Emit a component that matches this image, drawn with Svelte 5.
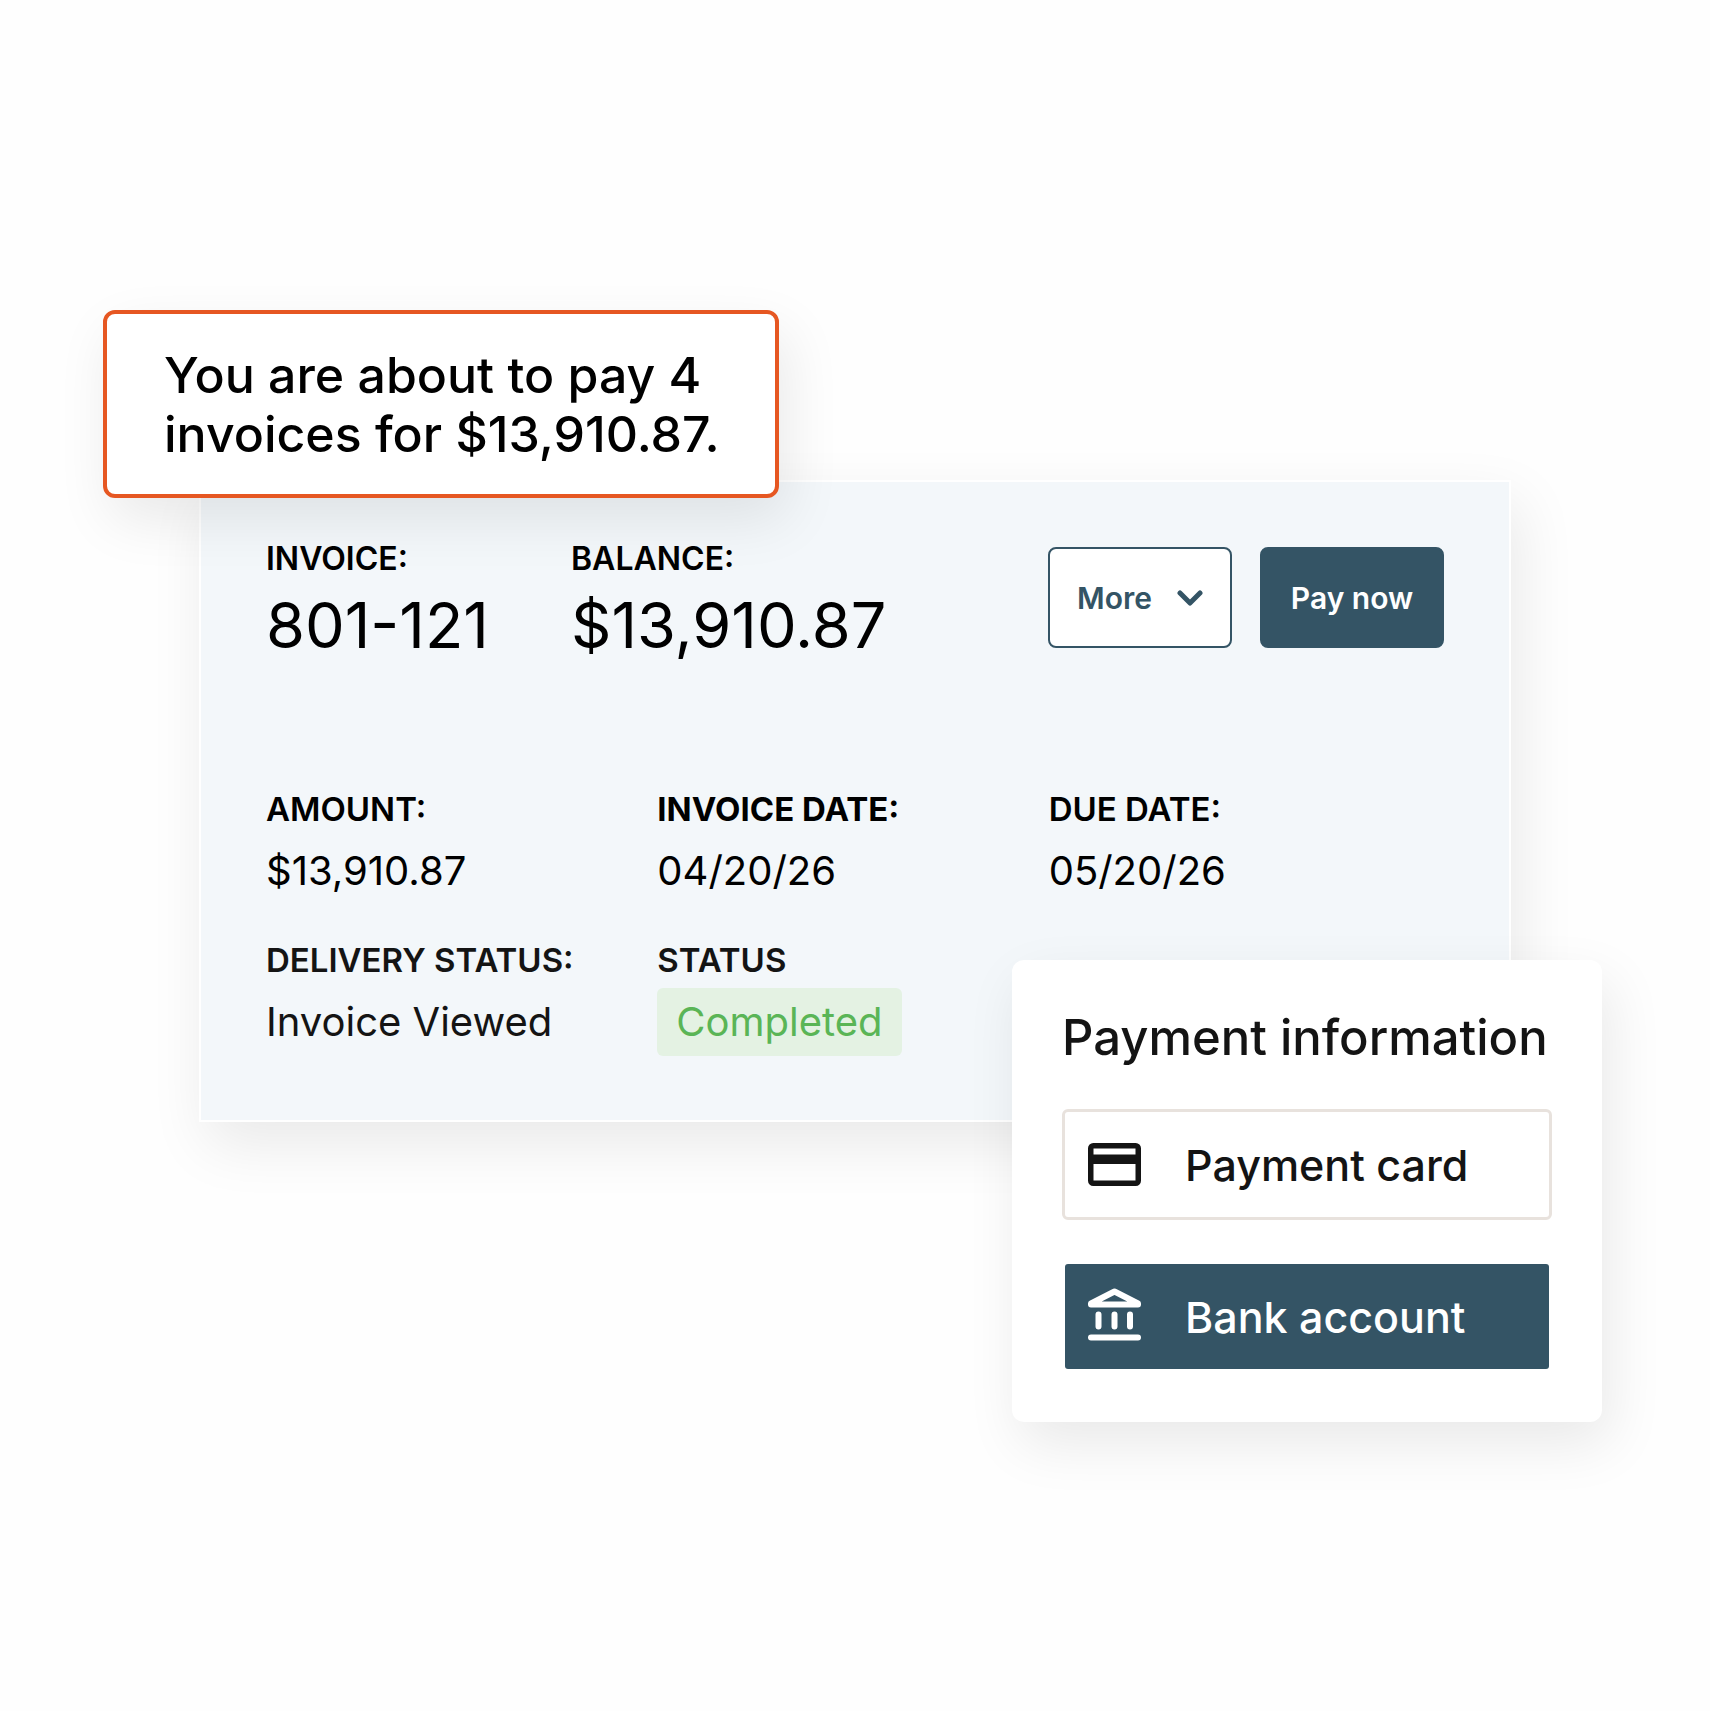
<script>
    const totals = [
        { label: 'INVOICE:', value: '801-121' },
        { label: 'BALANCE:', value: '$13,910.87' }
    ];

    const details = [
        { label: 'AMOUNT:', value: '$13,910.87' },
        { label: 'INVOICE DATE:', value: '04/20/26', strong: true },
        { label: 'DUE DATE:', value: '05/20/26' },
        { label: 'DELIVERY STATUS:', value: 'Invoice Viewed', soft: true },
        { label: 'STATUS', value: 'Completed', soft: true, badge: true }
    ];

    const methods = [
        { id: 'card', label: 'Payment card' },
        { id: 'bank', label: 'Bank account' }
    ];

    let selected = $state('bank');
</script>

<main class="page">
    <div class="scene">
        <section class="invoice" aria-label="Invoice">
            <header class="invoice-head">
                <dl class="totals">
                    {#each totals as item}
                        <div class="total">
                            <dt>{item.label}</dt>
                            <dd>{item.value}</dd>
                        </div>
                    {/each}
                </dl>
                <div class="actions">
                    <button class="btn btn-outline" type="button">
                        More
                        <svg class="chevron" viewBox="0 0 26 16" aria-hidden="true">
                            <path d="M3 3l10 10L23 3" />
                        </svg>
                    </button>
                    <button class="btn btn-solid" type="button">Pay now</button>
                </div>
            </header>

            <dl class="details">
                {#each details as item}
                    <div class="detail" class:soft={item.soft}>
                        <dt class:strong={item.strong}>{item.label}</dt>
                        <dd class:badge={item.badge}>{item.value}</dd>
                    </div>
                {/each}
            </dl>
        </section>

        <p class="notice" role="status">You are about to pay 4 invoices for $13,910.87.</p>

        <section class="payment">
            <h2>Payment information</h2>
            {#each methods as method}
                <button
                    class="method"
                    class:selected={selected === method.id}
                    type="button"
                    aria-pressed={selected === method.id}
                    onclick={() => (selected = method.id)}
                >
                    {#if method.id === 'card'}
                        <svg class="icon" viewBox="0 0 53 53" aria-hidden="true">
                            <rect x="2.75" y="7.75" width="47.5" height="37.5" rx="2.5" fill="none" stroke="currentColor" stroke-width="5.5" />
                            <path d="M3 16.5h47V26H3z" fill="currentColor" />
                        </svg>
                    {:else}
                        <svg class="icon" viewBox="0 0 53 53" aria-hidden="true">
                            <g fill="none" stroke="currentColor" stroke-width="6" stroke-linecap="round" stroke-linejoin="round">
                                <path d="M3 14.500v-1L26.500 1.500 50 13.500v1z" />
                                <path d="M10.500 24.500v12M26.500 24.500v12M42 24.500v12M3 47.500h47" />
                            </g>
                        </svg>
                    {/if}
                    {method.label}
                </button>
            {/each}
        </section>
    </div>
</main>

<style>
    :global(body) {
        background: #fefefe;
    }

    .page {
        --slate: #345465;
        --shadow: 8px 22px 56px rgba(0, 0, 0, 0.085);

        padding: 480px 199px 589px;
        font-family: Inter, "Liberation Sans", sans-serif;
        color: #000;
    }

    .scene {
        position: relative;
    }

    dl,
    dd,
    h2,
    .notice {
        margin: 0;
    }

    button {
        font-family: inherit;
        cursor: pointer;
    }

    /* invoice card */
    .invoice {
        padding: 57px 65px 64px;
        border: 2px solid #fff;
        background: #f3f7fa;
        box-shadow: var(--shadow);
    }

    .invoice-head {
        display: flex;
        justify-content: space-between;
        align-items: flex-end;
        padding-bottom: 126px;
    }

    .totals {
        display: flex;
        gap: 82px;
    }

    .total dt {
        font-size: 32px;
        font-weight: 600;
        line-height: 40px;
    }

    .total dd {
        margin-top: 8px;
        font-size: 63px;
        line-height: 76px;
    }

    .actions {
        display: flex;
        gap: 28px;
        padding-bottom: 15px;
    }

    .btn {
        display: flex;
        align-items: center;
        justify-content: center;
        gap: 25px;
        min-width: 184px;
        height: 101px;
        padding: 0 26px;
        border: 2px solid var(--slate);
        border-radius: 8px;
        font-size: 30px;
        font-weight: 600;
    }

    .btn-outline {
        background: #fff;
        color: var(--slate);
    }

    .btn-solid {
        background: var(--slate);
        color: #fff;
    }

    .chevron {
        width: 26px;
        height: 16px;
        fill: none;
        stroke: currentColor;
        stroke-width: 5;
        stroke-linecap: round;
        stroke-linejoin: round;
    }

    .details {
        display: grid;
        grid-template-columns: repeat(3, 1fr);
        row-gap: 35px;
        padding-right: 4px;
    }

    .detail dt {
        font-size: 33px;
        font-weight: 600;
        line-height: 40px;
    }

    .detail dt.strong {
        font-weight: 700;
    }

    .detail dd {
        margin-top: 8px;
        font-size: 40px;
        line-height: 68px;
    }

    .soft {
        color: #141414;
    }

    .detail .badge {
        width: fit-content;
        padding: 0 19px;
        border-radius: 6px;
        background: #e4f2e3;
        color: #5ab556;
    }

    /* notice over the top left corner */
    .notice {
        position: absolute;
        top: -170px;
        left: -96px;
        box-sizing: border-box;
        width: 676px;
        padding: 32px 50px 30px 57px;
        border: 4px solid #e65722;
        border-radius: 12px;
        background: #fff;
        box-shadow: var(--shadow);
        font-size: 50px;
        font-weight: 500;
        line-height: 59px;
    }

    /* payment panel over the bottom right corner */
    .payment {
        position: absolute;
        top: 480px;
        right: -91px;
        display: flex;
        flex-direction: column;
        gap: 41px;
        box-sizing: border-box;
        width: 590px;
        padding: 48px 50px 50px;
        border-radius: 12px;
        background: #fff;
        box-shadow: var(--shadow);
        color: #141414;
    }

    .payment h2 {
        font-size: 49px;
        font-weight: 500;
        line-height: 60px;
        white-space: nowrap;
    }

    .method {
        display: flex;
        align-items: center;
        gap: 44px;
        height: 111px;
        padding: 0 23px;
        border: 3px solid #e8e2dd;
        border-radius: 6px;
        background: #fff;
        color: #141414;
        font-size: 43px;
        font-weight: 500;
    }

    .method.selected {
        border-color: transparent;
        background: var(--slate);
        background-clip: padding-box;
        color: #fff;
    }

    .icon {
        width: 53px;
        height: 53px;
        overflow: visible;
    }
</style>
